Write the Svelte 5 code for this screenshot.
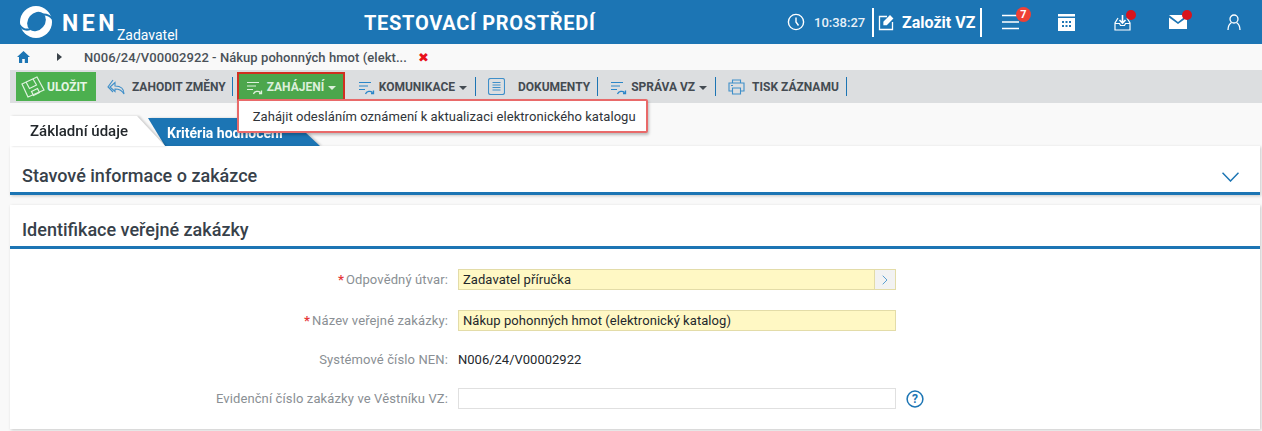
<script>
  const fields = [
    { label: 'Odpovědný útvar:', required: true, value: 'Zadavatel příručka', kind: 'req', pick: true },
    { label: 'Název veřejné zakázky:', required: true, value: 'Nákup pohonných hmot (elektronický katalog)', kind: 'req' },
    { label: 'Systémové číslo NEN:', value: 'N006/24/V00002922', kind: 'text' },
    { label: 'Evidenční číslo zakázky ve Věstníku VZ:', value: '', kind: 'empty', help: true }
  ];
</script>

{#snippet flow(color)}
  <svg class="ico flow" width="18" height="18" viewBox="0 0 18 18" fill="none" stroke={color} stroke-width="1.1">
    <path d="M1 4.500h12M1 8h9M1 11.500h6" />
    <path d="M7.500 16c1-3 5-3.500 7-1.500M15.500 12.500V15.500h-2.500" stroke-width="1.300" />
  </svg>
{/snippet}

<div class="page">
  <header class="top">
    <div class="brand">
      <svg width="34" height="34" viewBox="0 0 34 34">
        <circle cx="17" cy="17" r="16" fill="#fff" />
        <ellipse cx="17.500" cy="16.500" rx="8.500" ry="10.500" transform="rotate(40 17.500 16.500)" fill="#1c75b4" />
        <path d="M23 9.500C27 9 31 10.500 33.500 14" fill="none" stroke="#1c75b4" stroke-width="2" />
        <path d="M11.500 24C7 25.500 3 24 .5 20" fill="none" stroke="#1c75b4" stroke-width="2" />
      </svg>
      <span class="nen">NEN</span>
      <span class="role">Zadavatel</span>
    </div>
    <div class="env">TESTOVACÍ PROSTŘEDÍ</div>
    <div class="tools">
      <svg class="clock" width="18" height="18" viewBox="0 0 18 18" fill="none" stroke="#fff" stroke-width="1.4">
        <circle cx="9" cy="9" r="7.600" /><path d="M9 4.500V9l2.500 3.500" />
      </svg>
      <span class="time">10:38:27</span>
      <div class="create">
        <svg width="17" height="17" viewBox="0 0 17 17" fill="none" stroke="#fff" stroke-width="1.3">
          <path d="M9 2.500H1.500v13h13V8" /><path d="M6 8l6-6 2.500 2.500-6 6H6z" fill="#fff" />
        </svg>
        <span>Založit VZ</span>
      </div>
      <button class="tool">
        <svg width="17" height="16" viewBox="0 0 17 16" stroke="#fff" stroke-width="1.5"><path d="M0 1.500h17M0 8h17M0 14.500h17" /></svg>
        <span class="count">7</span>
      </button>
      <button class="tool">
        <svg width="17" height="17" viewBox="0 0 17 17" fill="#fff">
          <path fill-rule="evenodd" d="M0 0h17v2.500H0zM0 4h17v13H0zM4 7v2h2V7zm3.500 0v2h2V7zM11 7v2h2V7zM4 11v2h2v-2zm3.500 0v2h2v-2zm3.500 0v2h2v-2z" />
        </svg>
      </button>
      <button class="tool">
        <svg width="17" height="17" viewBox="0 0 17 17" fill="none" stroke="#fff" stroke-width="1.200">
          <path d="M4 4L1 9v7h15V9l-3-5M1 9.500h4.500l1 2h4l1-2H16" /><path d="M8.500 1v8M5.500 6l3 3 3-3" stroke-width="1.600" />
        </svg>
        <span class="dot"></span>
      </button>
      <button class="tool">
        <svg width="18" height="14" viewBox="0 0 18 14" fill="#fff"><path d="M0 0h18L9 7zM0 2.500V14h18V2.500L9 9z" /></svg>
        <span class="dot"></span>
      </button>
      <button class="tool">
        <svg width="14" height="16" viewBox="0 0 14 16" fill="none" stroke="#fff" stroke-width="1.300"><circle cx="7" cy="5" r="4" /><path d="M1 16c0-4 2-6.500 3.500-7.500M13 16c0-4-2-6.500-3.500-7.500" /></svg>
      </button>
    </div>
  </header>

  <nav class="crumbs">
    <svg width="13" height="12" viewBox="0 0 13 12" fill="#1c75b4"><path d="M6.500 0L0 6h2v6h3.200V8h2.600v4H11V6h2z" /></svg>
    <span class="caret"></span>
    <span class="path">N006/24/V00002922 - Nákup pohonných hmot (elekt...</span>
    <span class="close">✖</span>
  </nav>

  <div class="toolbar">
    <button class="save">
      <svg width="24" height="22" viewBox="0 0 24 22" fill="none" stroke="#dff2df" stroke-width="1.200">
        <path d="M1 8l15-7 7 13-16 7z" /><path d="M5 6l3.500 6.500 7-3.500L12 3M10.500 15.500l6-3 2 4-6 3z" />
      </svg>
      ULOŽIT
    </button>
    <button class="act first">
      <svg class="ico" width="18" height="16" viewBox="0 0 18 16" fill="none" stroke="#3f8fc9" stroke-width="1.100">
        <path d="M17 15c0-5-3-8-9-8V3.500L3 8l5 4.500V10c4 0 7 1 9 5zM6 1L1 8l5 5" />
      </svg>
      ZAHODIT ZMĚNY
    </button>
    <span class="sep"></span>
    <div class="hl">
      <button class="act active">
        {@render flow('#dff2df')}
        ZAHÁJENÍ<span class="arrow"></span>
      </button>
      <div class="menu">Zahájit odesláním oznámení k aktualizaci elektronického katalogu</div>
    </div>
    <button class="act">
      {@render flow('#2a86c8')}
      KOMUNIKACE<span class="arrow"></span>
    </button>
    <span class="sep"></span>
    <button class="act pushed">
      <svg class="ico doc" width="17" height="17" viewBox="0 0 17 17" fill="none" stroke="#3f8fc9" stroke-width="1.100">
        <rect x=".5" y=".5" width="16" height="16" rx="2" /><path d="M4.500 4.500h8M4.500 7h8M4.500 9.500h8M4.500 12h8" />
      </svg>
      DOKUMENTY
    </button>
    <span class="sep"></span>
    <button class="act pushed">
      {@render flow('#2a86c8')}
      SPRÁVA VZ<span class="arrow"></span>
    </button>
    <span class="sep"></span>
    <button class="act pushed">
      <svg class="ico" width="17" height="16" viewBox="0 0 17 16" fill="none" stroke="#3f8fc9" stroke-width="1.100">
        <path d="M4.500 4V1h8v3M4 12H1V4h15v8h-3M4.500 9h8v6h-8zM3 6.500h2" />
      </svg>
      TISK ZÁZNAMU
    </button>
    <span class="sep"></span>
  </div>

  <div class="tabs">
    <div class="shade on-wrap"><div class="tab on">Základní údaje</div></div>
    <div class="shade off-wrap"><div class="tab off">Kritéria hodnocení</div></div>
  </div>

  <section class="panel status">
    <h2>Stavové informace o zakázce</h2>
    <svg class="chev" width="17" height="10" viewBox="0 0 17 10" fill="none" stroke="#1c75b4" stroke-width="1.500"><path d="M.5.800L8.500 9 16.500.800" /></svg>
  </section>

  <section class="panel ident">
    <h2>Identifikace veřejné zakázky</h2>
    <div class="form">
      {#each fields as f}
        <div class="row" class:short={f.kind === 'text'}>
          <div class="label">
            {#if f.required}<span class="star">*</span>{/if}{f.label}
          </div>
          {#if f.kind === 'text'}
            <div class="plain">{f.value}</div>
          {:else}
            <div class="input {f.kind}">
              <span class="val">{f.value}</span>
              {#if f.pick}
                <span class="pick">
                  <svg width="6" height="10" viewBox="0 0 6 10" fill="none" stroke="#5a9fd2" stroke-width="1"><path d="M.7.700L5 5 .7 9.300" /></svg>
                </span>
              {/if}
            </div>
          {/if}
          {#if f.help}
            <svg class="help" width="18" height="18" viewBox="0 0 18 18">
              <circle cx="9" cy="9" r="7.900" fill="none" stroke="#1c75b4" stroke-width="1.500" />
              <text x="9" y="13" text-anchor="middle" class="q">?</text>
            </svg>
          {/if}
        </div>
      {/each}
    </div>
  </section>
</div>

<style>
  :global(body) {
    margin: 0;
    background: #f9f9f9;
  }
  .page {
    width: 1262px;
    height: 431px;
    overflow: hidden;
    font-family: Roboto, "Liberation Sans", sans-serif;
    color: #3a4249;
  }
  button {
    font: inherit;
    border: 0;
    background: none;
    padding: 0;
    color: inherit;
  }

  .top {
    height: 44px;
    background: #1c75b4;
    color: #fff;
    display: flex;
    align-items: center;
    position: relative;
  }
  .brand {
    display: flex;
    align-items: center;
    padding-left: 19px;
    width: 340px;
    box-sizing: border-box;
  }
  .nen {
    font-size: 23px;
    font-weight: 700;
    letter-spacing: 3.500px;
    margin-left: 9px;
    margin-top: 2px;
  }
  .role {
    font-size: 14px;
    margin-left: -1px;
    margin-top: 26px;
    width: 70px;
  }
  .env {
    position: absolute;
    left: 364px;
    top: 11px;
    font-size: 20px;
    font-weight: 700;
    letter-spacing: 0.700px;
    line-height: 24px;
  }
  .tools {
    margin-left: auto;
    display: flex;
    align-items: center;
    height: 44px;
  }
  .time {
    font-size: 13px;
    font-weight: 500;
    margin-left: 9px;
    width: 58px;
    color: #e8f1f8;
  }
  .create {
    display: flex;
    align-items: center;
    gap: 7px;
    width: 110px;
    height: 29px;
    box-sizing: border-box;
    padding-left: 4px;
    border-left: 2px solid #fff;
    border-right: 2px solid #fff;
    font-size: 16px;
    font-weight: 700;
    white-space: nowrap;
  }
  .tool {
    position: relative;
    width: 56px;
    display: flex;
    justify-content: center;
    align-items: center;
    height: 44px;
  }
  .count {
    position: absolute;
    left: 34px;
    top: 7px;
    width: 15px;
    height: 15px;
    border-radius: 50%;
    background: #ee4035;
    font-size: 11px;
    font-weight: 700;
    line-height: 15px;
    text-align: center;
  }
  .dot {
    position: absolute;
    left: 32px;
    top: 10px;
    width: 10px;
    height: 10px;
    border-radius: 50%;
    background: #d8141c;
  }

  .crumbs {
    height: 26px;
    display: flex;
    align-items: center;
    padding-left: 17px;
    font-size: 13px;
    font-weight: 500;
    letter-spacing: 0.060px;
    color: #4a5158;
  }
  .caret {
    width: 0;
    height: 0;
    margin: 0 22px 0 27px;
    border-left: 5px solid #3a4249;
    border-top: 4px solid transparent;
    border-bottom: 4px solid transparent;
  }
  .close {
    margin-left: 11px;
    color: #e8101a;
    font-size: 13px;
    font-family: "DejaVu Sans", sans-serif;
  }

  .toolbar {
    margin-left: 10px;
    height: 33px;
    background: #dcdee0;
    display: flex;
    align-items: center;
    font-size: 12px;
    font-weight: 700;
    color: #444b52;
    padding-left: 6px;
  }
  .save {
    width: 80px;
    height: 29px;
    background: #4cb04f;
    color: #e4f5e4;
    display: flex;
    align-items: center;
    gap: 2px;
    padding-left: 5px;
    box-sizing: border-box;
    font-weight: 700;
  }
  .save svg {
    flex-shrink: 0;
  }
  .act {
    display: flex;
    align-items: center;
    height: 29px;
    padding: 0 4px;
    font-weight: 700;
    white-space: nowrap;
  }
  .act .ico {
    flex-shrink: 0;
    margin-right: 7px;
  }
  .act .flow {
    margin-right: 3px;
  }
  .act .doc {
    margin-right: 13px;
  }
  .first {
    margin-left: 7px;
    padding-right: 3px;
  }
  .pushed {
    margin-left: 5px;
  }
  .sep {
    width: 1px;
    height: 19px;
    background: #1c75b4;
    margin: 0 3px;
  }
  .hl {
    position: relative;
    margin: 0 9px 0 1px;
  }
  .active {
    width: 108px;
    box-sizing: border-box;
    background: #4ca64c;
    border: 2px solid #d12f20;
    color: #dcefdc;
    padding-left: 7px;
  }
  .arrow {
    width: 0;
    height: 0;
    margin: 2px 1px 0 4px;
    border-top: 4px solid currentColor;
    border-left: 4px solid transparent;
    border-right: 4px solid transparent;
  }
  .menu {
    position: absolute;
    z-index: 5;
    left: 0;
    top: 27px;
    width: 411px;
    height: 34px;
    box-sizing: border-box;
    background: #fff;
    border: 2px solid #e96a6a;
    border-radius: 2px;
    box-shadow: 1px 2px 3px rgba(0, 0, 0, 0.25);
    color: #2f3439;
    font-size: 13px;
    font-weight: 400;
    letter-spacing: 0.060px;
    line-height: 32px;
    padding-left: 14px;
    white-space: nowrap;
  }

  .tabs {
    display: flex;
    margin: 13px 0 0 10px;
    height: 30px;
  }
  .shade {
    filter: drop-shadow(2px 0 1px rgba(0, 0, 0, 0.18));
  }
  .on-wrap {
    position: relative;
    z-index: 1;
  }
  .off-wrap {
    margin: 2px 0 0 -17px;
  }
  .tab {
    white-space: nowrap;
    box-sizing: border-box;
  }
  .on {
    width: 155px;
    height: 30px;
    background: #fff;
    color: #23282c;
    padding-left: 20px;
    font-size: 15px;
    font-weight: 500;
    line-height: 30px;
    clip-path: polygon(0 0, 127px 0, 155px 100%, 0 100%);
  }
  .off {
    width: 172px;
    height: 28px;
    padding-left: 19px;
    background: #1c75b4;
    color: #fff;
    font-size: 14px;
    font-weight: 700;
    line-height: 30px;
    clip-path: polygon(0 0, 142px 0, 172px 100%, 17px 100%);
  }
  .panel {
    position: relative;
    margin-left: 10px;
    width: 1250px;
    background: #fff;
    box-shadow: 1px 1px 3px rgba(0, 0, 0, 0.2);
  }
  h2 {
    margin: 0;
    font-size: 18px;
    font-weight: 500;
    line-height: 24px;
    padding: 18px 12px 4px;
    color: #37414a;
    border-bottom: 3px solid #1c75b4;
  }
  .ident h2 {
    padding-top: 13px;
  }
  .chev {
    position: absolute;
    right: 21px;
    top: 26px;
  }
  .ident {
    margin-top: 10px;
    height: 224px;
  }
  .form {
    padding-top: 20px;
  }
  .row {
    display: flex;
    align-items: center;
    height: 21px;
    margin-bottom: 20px;
    font-size: 13px;
  }
  .row.short {
    height: 17px;
  }
  .label {
    width: 438px;
    margin-right: 10px;
    text-align: right;
    color: #8a8f94;
    letter-spacing: 0.120px;
  }
  .star {
    color: #e63a3a;
    margin-right: 2px;
    font-weight: 700;
  }
  .plain {
    color: #23282c;
  }
  .input {
    width: 438px;
    height: 21px;
    box-sizing: border-box;
    border: 1px solid #e0e0e0;
    background: #fff;
    display: flex;
    align-items: center;
    color: #23282c;
    letter-spacing: 0.060px;
  }
  .req {
    background: #fff8c4;
    border-color: #e3dca8;
  }
  .val {
    flex: 1;
    padding-left: 4px;
  }
  .pick {
    width: 20px;
    height: 19px;
    background: #f2f2f2;
    border-left: 1px solid #e3dca8;
    display: flex;
    align-items: center;
    justify-content: center;
  }
  .help {
    margin-left: 10px;
  }
  .q {
    font-size: 12px;
    font-weight: 700;
    fill: #1c75b4;
  }
</style>
